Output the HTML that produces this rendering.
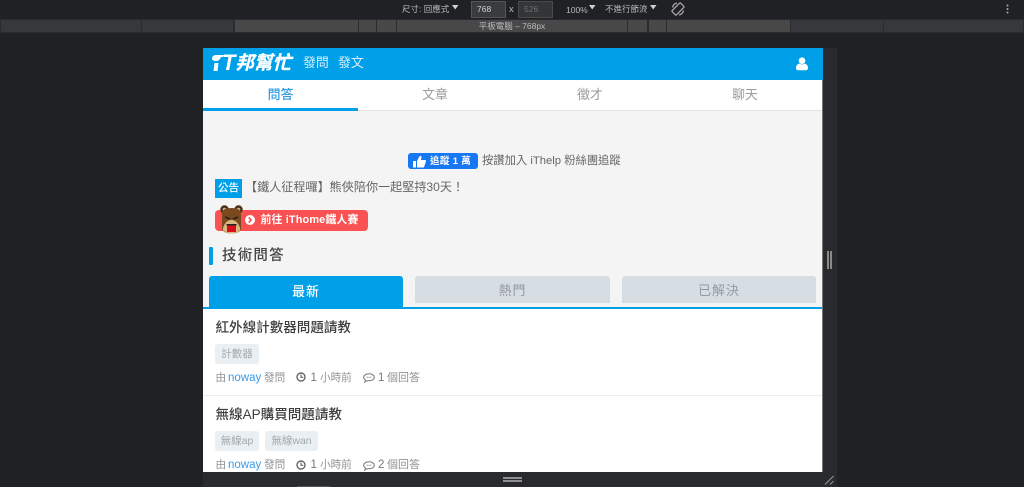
<!DOCTYPE html>
<html lang="zh-Hant"><head><meta charset="utf-8"><title>iT邦幫忙</title>
<style>
html,body{margin:0;padding:0;width:1024px;height:487px;overflow:hidden;background:#202124}
body{position:relative;font-family:"Liberation Sans","Noto Sans CJK TC",sans-serif}
.a{position:absolute;white-space:nowrap}
.r{position:absolute;top:20px;height:12px}
.c{transform:translateX(-50%)}
.dt{color:#b8babd;font-size:8.5px;line-height:10px}
.g{color:#8f9295;font-size:10.6px;line-height:14px}
.n{font-size:11.500px}
.tag{position:absolute;height:20px;line-height:20px;background:#e9eff2;color:#a0a9ae;font-size:10.500px;border-radius:3px;text-align:center}
.q{color:#3e3e3e;font-size:13.56px;font-weight:500;line-height:18px}
.tab{position:absolute;top:276px;height:27px;line-height:29px;background:#d6dde3;color:#949a9f;border-radius:3px 3px 0 0;text-align:center;font-size:12.900px;letter-spacing:1px}
.top{color:#9b9b9b;font-size:12.900px;line-height:18px}
</style></head><body>
<div class="a" style="left:0;top:0;width:1024px;height:19px;background:#202124;border-bottom:1px solid #3a3b3d"></div>
<div class="a" style="left:0;top:19px;width:1024px;height:14px;background:#2a2b2e"></div>
<div class="r" style="left:1px;width:140px;background:#36383c"></div>
<div class="r" style="left:142px;width:91px;background:#36383c"></div>
<div class="r" style="left:235px;width:123px;background:#484848"></div>
<div class="r" style="left:359px;width:17px;background:#484848"></div>
<div class="r" style="left:377px;width:19px;background:#484848"></div>
<div class="r" style="left:397px;width:230px;background:#484848"></div>
<div class="r" style="left:628px;width:19px;background:#484848"></div>
<div class="r" style="left:649px;width:17px;background:#484848"></div>
<div class="r" style="left:667px;width:123px;background:#484848"></div>
<div class="r" style="left:791px;width:92px;background:#36383c"></div>
<div class="r" style="left:884px;width:139px;background:#36383c"></div>

<div class="a dt" style="left:402px;top:4px">尺寸: 回應式</div>
<svg class="a" style="left:452px;top:5px" width="7" height="5"><path d="M0 0H6.500L3.200 4.500Z" fill="#d0d0d0"/></svg>
<div class="a" style="left:471px;top:1px;width:33px;height:15px;background:#3a3b3d;border:1px solid #555;color:#d4d4d4;font-size:8.500px;line-height:15px;text-indent:5px">768</div>
<div class="a dt" style="left:509px;top:5px;font-size:9.500px">x</div>
<div class="a" style="left:518px;top:1px;width:33px;height:15px;background:#343537;border:1px solid #4a4a4a;color:#6e6e6e;font-size:8.500px;line-height:15px;text-indent:5px">526</div>
<div class="a dt" style="left:566px;top:5px">100%</div>
<svg class="a" style="left:589px;top:5px" width="7" height="5"><path d="M0 0H6.500L3.200 4.500Z" fill="#d0d0d0"/></svg>
<div class="a dt" style="left:605px;top:4px">不進行節流</div>
<svg class="a" style="left:650px;top:5px" width="7" height="5"><path d="M0 0H6.500L3.200 4.500Z" fill="#d0d0d0"/></svg>
<svg class="a" style="left:671px;top:2px" width="14" height="14" fill="none" stroke="#aaa" stroke-width="1.300"><rect x="4" y="1" width="6" height="12" rx="1" transform="rotate(45 7 7)"/><path d="M1.500 5.500A6 6 0 0 1 6 1M12.500 8.500A6 6 0 0 1 8 13"/></svg>
<svg class="a" style="left:1006px;top:4px" width="3" height="10" fill="#a8a8a8"><circle cx="1.500" cy="1.500" r="1"/><circle cx="1.500" cy="5" r="1"/><circle cx="1.500" cy="8.500" r="1"/></svg>
<div class="a c dt" style="left:512px;top:21px">平板電腦 – 768px</div>

<div class="a" style="left:203px;top:48px;width:634px;height:439px;background:#292a2d"></div>
<div class="a" style="left:827px;top:251px;width:2px;height:18px;background:#8a8a8a"></div>
<div class="a" style="left:830px;top:251px;width:2px;height:18px;background:#8a8a8a"></div>

<div class="a" style="left:203px;top:48px;width:619px;height:424px;background:#f4f4f4"></div>
<div class="a" style="left:822px;top:80px;width:1px;height:392px;background:#777"></div>
<div class="a" style="left:203px;top:48px;width:620px;height:32px;background:#00a0e9"></div>
<svg class="a" style="left:211px;top:53px" width="14" height="20" fill="#fff"><path d="M1 5.500C1 3.500 2.800 2 5 2H13L12.500 3.500L9.500 4.500C9 6.800 7.500 8 5 8C2.800 8 1 7.200 1 5.500Z"/><path d="M3.500 10H7.500L6.500 18H2.500Z"/></svg>
<div class="a" style="left:222px;top:50px;color:#fff;font-size:22px;line-height:26px;font-weight:700;font-style:italic;font-family:'Liberation Sans',sans-serif">T</div>
<div class="a" style="left:235.500px;top:52px;color:#fff;font-size:18.500px;line-height:22px;font-weight:700;font-style:italic;-webkit-text-stroke:.3px #fff">邦幫忙</div>
<div class="a" style="left:303px;top:54px;color:#d8effb;font-size:12.900px;line-height:18px">發問</div>
<div class="a" style="left:338px;top:54px;color:#d8effb;font-size:12.900px;line-height:18px">發文</div>
<svg class="a" style="left:796px;top:57px" width="12" height="14" fill="#fff"><circle cx="6" cy="3.700" r="3.300"/><path d="M0 11C0 8.500 1.500 7 3.500 6.500C5 7.700 7 7.700 8.500 6.500C10.500 7 12 8.500 12 11C12 12.500 11 13.300 10 13.300H2C1 13.300 0 12.500 0 11Z"/></svg>

<div class="a" style="left:203px;top:80px;width:619px;height:31px;background:#fff;border-bottom:1px solid #e2e2e2;box-sizing:border-box"></div>
<div class="a" style="left:203px;top:108px;width:155px;height:3px;background:#00a0e9"></div>
<div class="a c" style="left:280.500px;top:86px;color:#2f9be0;font-size:12.900px;line-height:18px;font-weight:500">問答</div>
<div class="a c top" style="left:435px;top:86px">文章</div>
<div class="a c top" style="left:590px;top:86px">徵才</div>
<div class="a c top" style="left:745px;top:86px">聊天</div>

<div class="a" style="left:408px;top:153px;width:70px;height:16px;background:#1877f2;border-radius:3px"></div>
<svg class="a" style="left:413px;top:155px" width="13" height="13" fill="#fff"><path d="M0 6H3V12.500H0ZM4 6L6.500 1.500C6.700.5 8.500.7 8.500 2.200L8 5H12C13 5 13.200 6 12.800 6.800L11.200 11.700C11 12.300 10.500 12.500 10 12.500H4Z"/></svg>
<div class="a" style="left:430px;top:154px;color:#fff;font-size:9.500px;line-height:15px;font-weight:700;letter-spacing:.35px">追蹤 1 萬</div>
<div class="a" style="left:482px;top:154px;color:#666;font-size:11.300px;line-height:14px">按讚加入 iThelp 粉絲團追蹤</div>

<div class="a" style="left:215px;top:179px;width:27px;height:19px;background:#00a0e9;color:#fff;font-size:10.500px;line-height:19px;text-align:center;font-weight:500">公告</div>
<div class="a" style="left:245px;top:178px;color:#666;font-size:12.100px;line-height:18px">【鐵人征程囉】熊俠陪你一起堅持30天！</div>

<div class="a" style="left:215px;top:210px;width:153px;height:21px;background:#fa5252;border-radius:4px"></div>
<svg class="a" style="left:220px;top:205px" width="23" height="29"><circle cx="4.500" cy="4.500" r="4.200" fill="#4a3018"/><circle cx="18.500" cy="4.500" r="4.200" fill="#4a3018"/><circle cx="4.500" cy="4.500" r="1.800" fill="#c8b59a"/><circle cx="18.500" cy="4.500" r="1.800" fill="#c8b59a"/><path d="M2 9C2 5 5 3 11.500 3S21 5 21 9V23C21 26.500 17 28.500 11.500 28.500S2 26.500 2 23Z" fill="#7a4a1e"/><path d="M5 12L10 14M18 12L13 14" stroke="#222" stroke-width="1.500"/><path d="M3 23C5 17 8 15 11.500 15S18 17 20 23V25C18 27.500 15 28.500 11.500 28.500S5 27.500 3 25Z" fill="#d8b880"/><rect x="7" y="20.500" width="9" height="6.500" fill="#d8101c"/><rect x="6.500" y="19" width="10" height="1.500" fill="#222"/></svg>
<svg class="a" style="left:245px;top:215px" width="10" height="10"><circle cx="5" cy="5" r="5" fill="#fff"/><path d="M3.700 2.500L6.200 5L3.700 7.500" fill="none" stroke="#fa5252" stroke-width="1.600"/></svg>
<div class="a" style="left:260.500px;top:212px;color:#fff;font-size:10.900px;line-height:16px;font-weight:700;letter-spacing:.15px">前往 iThome鐵人賽</div>

<div class="a" style="left:209px;top:247px;width:4px;height:18px;background:#00a0e9;border-radius:1px"></div>
<div class="a" style="left:222px;top:246px;color:#444;font-size:14.500px;line-height:20px;font-weight:500;letter-spacing:1.200px">技術問答</div>

<div class="tab" style="left:209px;width:194px;height:31px;line-height:31px;background:#00a0e9;color:#fff;font-weight:500">最新</div>
<div class="tab" style="left:415px;width:195px">熱門</div>
<div class="tab" style="left:622px;width:194px">已解決</div>

<div class="a" style="left:203px;top:309px;width:619px;height:163px;background:#fff"></div>
<div class="a" style="left:203px;top:307px;width:619px;height:2px;background:#00a0e9"></div>
<div class="a q" style="left:215.500px;top:319px">紅外線計數器問題請教</div>
<div class="tag" style="left:215px;top:344px;width:44px">計數器</div>
<div class="a g" style="left:215.500px;top:371px">由</div>
<div class="a g n" style="left:228px;top:371px;color:#3a9be8">noway</div>
<div class="a g" style="left:264px;top:371px">發問</div>
<svg class="a" style="left:296px;top:372px" width="10" height="10" fill="none" stroke="#666" stroke-width="1.400"><circle cx="5" cy="5" r="4"/><path d="M5 2.500V5.300H7.300" stroke-width="1.100"/></svg>
<div class="a g n" style="left:310.500px;top:371px;color:#777">1</div>
<div class="a g" style="left:320px;top:371px">小時前</div>
<svg class="a" style="left:363px;top:373px" width="12" height="10" fill="none" stroke="#777"><path d="M6 .8C9 .8 11.300 2.300 11.300 4.300S9 7.800 6 7.800C5.300 7.800 4.700 7.700 4.200 7.600L1.800 9C2.200 8.300 2.500 7.500 2.500 7C1.300 6.400.7 5.400.7 4.300.7 2.300 3 .8 6 .8Z"/><path d="M3.800 4.300H4.800M5.600 4.300H6.600M7.400 4.300H8.400"/></svg>
<div class="a g n" style="left:378px;top:371px;color:#777">1</div>
<div class="a g" style="left:387px;top:371px;font-size:11px">個回答</div>

<div class="a" style="left:203px;top:395px;width:619px;height:1px;background:#ececec"></div>
<div class="a q" style="left:215.500px;top:406px">無線AP購買問題請教</div>
<div class="tag" style="left:215px;top:431px;width:44px">無線ap</div>
<div class="tag" style="left:265px;top:431px;width:53px">無線wan</div>
<div class="a g" style="left:215.500px;top:458px">由</div>
<div class="a g n" style="left:228px;top:458px;color:#3a9be8">noway</div>
<div class="a g" style="left:264px;top:458px">發問</div>
<svg class="a" style="left:296px;top:460px" width="10" height="10" fill="none" stroke="#666" stroke-width="1.400"><circle cx="5" cy="5" r="4"/><path d="M5 2.500V5.300H7.300" stroke-width="1.100"/></svg>
<div class="a g n" style="left:310.500px;top:458px;color:#777">1</div>
<div class="a g" style="left:320px;top:458px">小時前</div>
<svg class="a" style="left:363px;top:461px" width="12" height="10" fill="none" stroke="#777"><path d="M6 .8C9 .8 11.300 2.300 11.300 4.300S9 7.800 6 7.800C5.300 7.800 4.700 7.700 4.200 7.600L1.800 9C2.200 8.300 2.500 7.500 2.500 7C1.300 6.400.7 5.400.7 4.300.7 2.300 3 .8 6 .8Z"/><path d="M3.800 4.300H4.800M5.600 4.300H6.600M7.400 4.300H8.400"/></svg>
<div class="a g n" style="left:378px;top:458px;color:#777">2</div>
<div class="a g" style="left:387px;top:458px;font-size:11px">個回答</div>
<div class="a" style="left:203px;top:472px;width:634px;height:15px;background:#292a2d"></div>
<div class="a" style="left:503px;top:477px;width:19px;height:2px;background:#8f8f8f"></div>
<div class="a" style="left:503px;top:480px;width:19px;height:2px;background:#8f8f8f"></div>
<svg class="a" style="left:824px;top:475px" width="11" height="10" stroke="#8f8f8f" stroke-width="1.200"><path d="M1 9.500L9.500 1M6 9.500L9.500 6"/></svg>
<div class="a" style="left:297px;top:486px;width:33px;height:1px;background:#555"></div>
</body></html>
